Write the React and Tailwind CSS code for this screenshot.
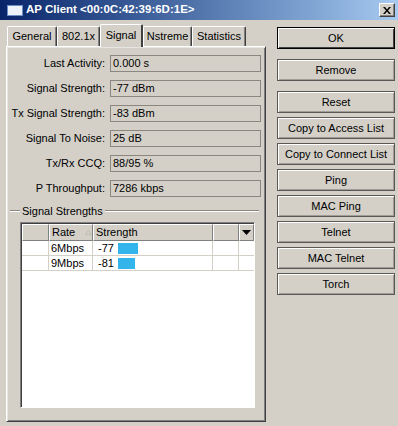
import React from "react";

function Btn({ children, def, className = "" }) {
  return (
    <div
      className={`h-[22px] flex items-center justify-center text-black ${
        def
          ? "border border-black shadow-[inset_1px_1px_0_#fff,inset_-1px_-1px_0_#404040]"
          : "border border-[#5a5854] shadow-[inset_1px_1px_0_#fff,inset_-1px_-1px_0_#a09d97]"
      } ${className}`}
    >
      {children}
    </div>
  );
}

function Field({ label, value }) {
  return (
    <div className="flex items-center h-[17px]">
      <div className="w-[98px] text-right pr-[1px]">{label}</div>
      <div className="ml-[4px] w-[151px] h-[17px] border border-[#8a8782] flex items-center pl-[2px] leading-none">
        {value}
      </div>
    </div>
  );
}

function Tab({ label, sel, w }) {
  if (sel) {
    return (
      <div
        className={`${w} h-[23px] border-t border-l border-white border-r-2 border-r-[#404040] rounded-t-[2px] bg-[#d4d0c8] flex items-center justify-center pb-[1px] relative z-10 -mb-[1px]`}
      >
        {label}
      </div>
    );
  }
  return (
    <div
      className={`${w} h-[20px] border-t border-l border-white border-r border-r-[#404040] shadow-[inset_-1px_0_0_#808080] rounded-t-[2px] flex items-center justify-center`}
    >
      {label}
    </div>
  );
}

export default function App() {
  const rows = [
    ["Last Activity:", "0.000 s"],
    ["Signal Strength:", "-77 dBm"],
    ["Tx Signal Strength:", "-83 dBm"],
    ["Signal To Noise:", "25 dB"],
    ["Tx/Rx CCQ:", "88/95 %"],
    ["P Throughput:", "7286 kbps"],
  ];
  const data = [
    ["6Mbps", "-77", 20],
    ["9Mbps", "-81", 17],
  ];
  return (
    <div className="w-[398px] h-[426px] bg-[#d4d0c8] overflow-hidden flex flex-col font-['Liberation_Sans',Arial,sans-serif] text-[11px] text-black">
      {/* title bar */}
      <div className="h-[20px] flex items-center bg-gradient-to-r from-[#0a246a] to-[#a6caf0] shrink-0">
        <div className="ml-[7px] w-[16px] h-[11px] bg-[#eef3fb] border border-[#6f8fc4]" />
        <div className="ml-[3px] text-white font-bold text-[11.5px] leading-none">
          AP Client &lt;00:0C:42:39:6D:1E&gt;
        </div>
        <div className="ml-auto mr-[3px] w-[16px] h-[14px] bg-[#d4d0c8] border border-t-white border-l-white border-r-[#404040] border-b-[#404040] shadow-[inset_-1px_-1px_0_#808080] flex items-center justify-center">
          <svg width="8" height="7" viewBox="0 0 8 7">
            <path d="M0 0h2l2 2.5L6 0h2L5 3.5 8 7H6L4 4.5 2 7H0l3-3.5z" fill="#000" />
          </svg>
        </div>
      </div>

      <div className="flex flex-1">
        {/* left */}
        <div className="ml-[6px] mt-[3px] w-[260px] flex flex-col mb-[4px]">
          <div className="flex items-end h-[23px] pl-[1px]">
            <Tab label="General" w="w-[50px]" />
            <Tab label="802.1x" w="w-[43px]" />
            <Tab label="Signal" w="w-[43px]" sel />
            <Tab label="Nstreme" w="w-[49px]" />
            <Tab label="Statistics" w="w-[54px]" />
          </div>
          <div className="flex-1 border border-t-white border-l-white border-r-[#404040] border-b-[#404040] shadow-[inset_1px_1px_0_#e8e6e2,inset_-1px_-1px_0_#808080] flex flex-col">
            <div className="mt-[8px] ml-[1px] flex flex-col gap-[8px]">
              {rows.map(([l, v]) => (
                <Field key={l} label={l} value={v} />
              ))}
            </div>
            {/* group header */}
            <div className="mt-[7px] h-[14px] flex items-center pl-[3px] pr-[6px]">
              <div className="w-[10px] h-[2px] border-t border-t-[#8a8782] border-b border-b-white" />
              <div className="px-[2px]">Signal Strengths</div>
              <div className="flex-1 h-[2px] border-t border-t-[#8a8782] border-b border-b-white" />
            </div>
            {/* table */}
            <div className="mt-[4px] ml-[13px] w-[235px] flex-1 mb-[13px] bg-white border border-t-[#808080] border-l-[#808080] border-r-white border-b-white shadow-[inset_1px_1px_0_#404040] flex flex-col pl-[1px] pt-[1px]">
              <div className="flex h-[17px] bg-[#d4d0c8]">
                <div className="w-[27px] border-t border-l border-white border-r border-b border-r-[#808080] border-b-[#808080]" />
                <div className="w-[44px] border-t border-l border-white border-r border-b border-r-[#808080] border-b-[#808080] flex items-center pl-[2px]">
                  Rate
                  <svg className="ml-[10px]" width="9" height="7" viewBox="0 0 9 7">
                    <path d="M4.5 0.5L8.5 6.5H0.5z" fill="none" stroke="#b8b5ae" strokeWidth="1" />
                  </svg>
                </div>
                <div className="w-[120px] border-t border-l border-white border-r border-b border-r-[#808080] border-b-[#808080] flex items-center pl-[2px]">
                  Strength
                </div>
                <div className="w-[26px] border-t border-l border-white border-r border-b border-r-[#808080] border-b-[#808080]" />
                <div className="flex-1 border-t border-l border-white border-r border-b border-r-[#808080] border-b-[#808080] flex items-center justify-center">
                  <svg width="9" height="5" viewBox="0 0 9 5">
                    <path d="M0 0H9L4.5 5z" fill="#000" />
                  </svg>
                </div>
              </div>
              {data.map(([r, s, w]) => (
                <div key={r} className="flex h-[15px] border-b border-[#d4d0c8]">
                  <div className="w-[27px] border-r border-[#d4d0c8]" />
                  <div className="w-[44px] border-r border-[#d4d0c8] flex items-center pl-[2px]">{r}</div>
                  <div className="w-[120px] border-r border-[#d4d0c8] flex items-center pl-[5px]">
                    <span className="w-[20px]">{s}</span>
                    <span className="h-[11px] bg-[#33b4ea]" style={{ width: w }} />
                  </div>
                  <div className="w-[26px] border-r border-[#d4d0c8]" />
                  <div className="flex-1" />
                </div>
              ))}
            </div>
          </div>
        </div>

        {/* right buttons */}
        <div className="ml-[11px] mt-[7px] w-[118px] flex flex-col">
          <Btn def>OK</Btn>
          <Btn className="mt-[10px]">Remove</Btn>
          <Btn className="mt-[10px]">Reset</Btn>
          <div className="mt-[4px] flex flex-col gap-[4px]">
            <Btn>Copy to Access List</Btn>
            <Btn>Copy to Connect List</Btn>
            <Btn>Ping</Btn>
            <Btn>MAC Ping</Btn>
            <Btn>Telnet</Btn>
            <Btn>MAC Telnet</Btn>
            <Btn>Torch</Btn>
          </div>
        </div>
      </div>
    </div>
  );
}
